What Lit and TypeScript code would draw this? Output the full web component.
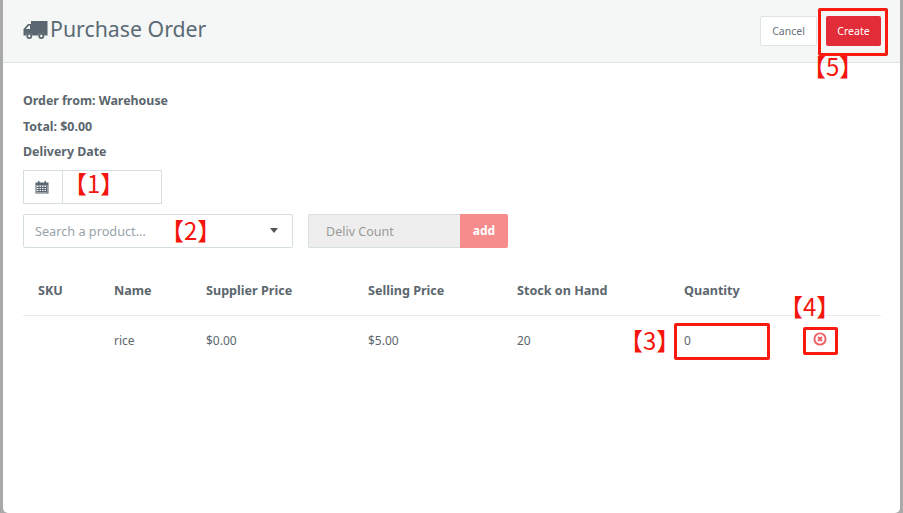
import { LitElement, html, css } from "lit";
import { customElement } from "lit/decorators.js";

@customElement("app-root")
export class AppRoot extends LitElement {
  static styles = css`
    :host { display: block; width: 903px; height: 513px; overflow: hidden; background: #a9a9a9; position: relative; font-family: "Noto Sans", "Open Sans", sans-serif; color: #5b666d; font-size: 12px; }
    .modal { position: absolute; left: 3px; top: 0; width: 897px; height: 513px; background: #fff; border-radius: 0 0 5px 5px; box-sizing: border-box; }
    .header { height: 63px; box-sizing: border-box; background: #f5f7f7; border-bottom: 1px solid #dde4e6; display: flex; align-items: center; padding: 0 19px 0 20px; }
    .title { display: flex; align-items: center; gap: 2px; font-size: 21.3px; color: #5b6a75; flex: 1; padding-bottom: 5px; }
    .title svg { width: 25px; height: 20px; margin-top: 2px; }
    .btn { height: 30px; box-sizing: border-box; display: flex; align-items: center; justify-content: center; border-radius: 2px; font-size: 10.5px; }
    .cancel { width: 57px; background: #fff; border: 1px solid #dde4e6; color: #66727a; margin-right: 9px; }
    .create { width: 55px; background: #e22c38; color: #fff; }
    .body { padding: 29px 20px 0; }
    .label { font-weight: 700; font-size: 12.4px; line-height: 18px; height: 25.5px; color: #5b666d; }
    .date { display: flex; width: 139px; height: 34px; box-sizing: border-box; border: 1px solid #d5dee0; margin-top: 1px; }
    .cal { width: 39px; border-right: 1px solid #d5dee0; display: flex; align-items: center; justify-content: center; padding-right: 3px; box-sizing: border-box; }
    .filters { display: flex; margin-top: 10px; }
    .select { width: 270px; height: 34px; box-sizing: border-box; border: 1px solid #d5dee0; border-radius: 2px; display: flex; align-items: center; justify-content: space-between; padding: 0 14px 0 11px; color: #98a3a9; font-size: 12.7px; }
    .caret { width: 0; height: 0; border-left: 4.5px solid transparent; border-right: 4.5px solid transparent; border-top: 5px solid #555; }
    .count { width: 152px; height: 34px; box-sizing: border-box; margin-left: 15px; background: #eee; border: 1px solid #d5dee0; border-right: 0; border-radius: 2px 0 0 2px; padding: 1px 0 0 17px; display: flex; align-items: center; color: #999; font-size: 12.5px; }
    .add { width: 48px; height: 34px; background: #f78c8c; color: #fff; font-weight: 700; font-size: 12px; display: flex; align-items: center; justify-content: center; border-radius: 0 2px 2px 0; }
    .row { display: grid; grid-template-columns: 76px 92px 162px 149px 167px 137px 1fr; width: 858px; }
    .row > div { padding-left: 15px; }
    .thead { margin-top: 25px; height: 43px; align-items: center; border-bottom: 1px solid #e8ecee; font-weight: 700; font-size: 12.6px; padding-bottom: 7px; box-sizing: border-box; }
    .tbody { height: 50px; align-items: center; }
    .del { display: flex; padding-left: 0 !important; }
    .del svg { display: block; margin-left: 7px; margin-top: -3px; }
    .box { position: absolute; border: 3px solid #fa1a10; border-radius: 2px; box-sizing: border-box; }
    .note { position: absolute; color: #f4150c; font-size: 24px; line-height: 28px; font-family: "Noto Sans CJK SC", "Noto Sans", sans-serif; font-weight: 400; white-space: nowrap; }
  `;

  render() {
    return html`
      <div class="modal">
        <div class="header">
          <div class="title">
            <svg viewBox="0 0 25 20"><path fill="#5b6770" d="M8 1h16.5v14.5h-2.9a3.4 3.4 0 0 0-6.6 0H9.6a3.4 3.4 0 0 0-6.6 0H.5V9l4.5-5h3zM6 5.5 2.8 9H7V5.5z"/><circle cx="6.3" cy="16" r="3" fill="#5b6770"/><circle cx="18.3" cy="16" r="3" fill="#5b6770"/><circle cx="6.3" cy="16" r="1.2" fill="#f5f7f7"/><circle cx="18.3" cy="16" r="1.2" fill="#f5f7f7"/></svg>
            <span>Purchase Order</span>
          </div>
          <div class="btn cancel">Cancel</div>
          <div class="btn create">Create</div>
        </div>
        <div class="body">
          <div class="label">Order from: Warehouse</div>
          <div class="label">Total: $0.00</div>
          <div class="label">Delivery Date</div>
          <div class="date">
            <div class="cal">
              <svg width="14" height="14" viewBox="0 0 14 14"><path fill="#5b6770" d="M.5 2.500h2.500V1h1.500v1.500h5V1H11v1.500h2.500V13.500H.5zM1.500 5.500v7h11v-7z"/><path stroke="#5b6770" stroke-width="1.100" d="M1.500 7.500h11M1.500 9.500h11M1.500 11.500h11M4 5.500v7M6.500 5.500v7M9 5.500v7M11.500 5.500v7"/></svg>
            </div>
          </div>
          <div class="filters">
            <div class="select"><span>Search a product...</span><span class="caret"></span></div>
            <div class="count">Deliv Count</div>
            <div class="add">add</div>
          </div>
          <div class="row thead">
            <div>SKU</div><div>Name</div><div>Supplier Price</div><div>Selling Price</div><div>Stock on Hand</div><div>Quantity</div><div></div>
          </div>
          <div class="row tbody">
            <div></div><div>rice</div><div>$0.00</div><div>$5.00</div><div>20</div><div>0</div>
            <div class="del">
              <svg width="14" height="14" viewBox="0 0 14 14"><circle cx="7" cy="7" r="5.600" fill="none" stroke="#ee5f64" stroke-width="1.900"/><path d="M5 5l4 4M9 5l-4 4" stroke="#ee5f64" stroke-width="1.900"/></svg>
            </div>
          </div>
        </div>
      </div>
      <div class="box" style="left:818px;top:8px;width:70px;height:48px"></div>
      <div class="box" style="left:674px;top:323px;width:96px;height:37px"></div>
      <div class="box" style="left:803px;top:327px;width:35px;height:28px"></div>
      <div class="note" style="left:63px;top:169px">【1】</div>
      <div class="note" style="left:160px;top:216px">【2】</div>
      <div class="note" style="left:619px;top:326px">【3】</div>
      <div class="note" style="left:779px;top:292px">【4】</div>
      <div class="note" style="left:802px;top:52px">【5】</div>
    `;
  }
}
